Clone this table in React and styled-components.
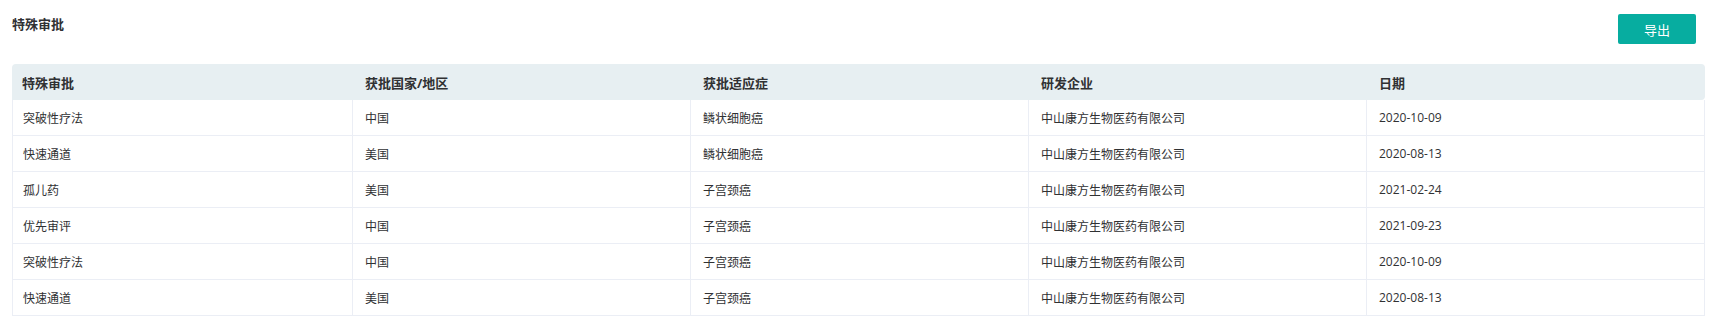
import React from "react";
import styled, { createGlobalStyle } from "styled-components";

const GlobalStyle = createGlobalStyle`
  html, body { margin: 0; padding: 0; background: #ffffff; }
  body {
    font-family: "Open Sans", "Noto Sans CJK SC", "Noto Sans", sans-serif;
    color: #303133;
  }
`;

const Page = styled.div`
  width: 1714px;
  box-sizing: border-box;
  padding: 14px 9px 0 12px;
`;

const TopBar = styled.div`
  display: flex;
  justify-content: space-between;
  align-items: flex-start;
  margin-bottom: 20px;
`;

const Title = styled.h2`
  margin: 1px 0 0;
  font-size: 13px;
  line-height: 18px;
  font-weight: 700;
  color: #303133;
`;

const ExportButton = styled.button`
  width: 78px;
  height: 30px;
  margin-right: 9px;
  border: none;
  border-radius: 2px;
  background: #07ada0;
  color: #ffffff;
  font-family: inherit;
  font-size: 13px;
  cursor: pointer;
`;

const Table = styled.table`
  width: 100%;
  table-layout: fixed;
  border-collapse: separate;
  border-spacing: 0;
  font-size: 12px;
`;

const HeadCell = styled.th`
  height: 36px;
  padding: 0 12px;
  padding-left: ${(p) => (p.$first ? "10px" : "12px")};
  background: #e7eff2;
  text-align: left;
  font-size: 13px;
  font-weight: 700;
  color: #303133;
  box-sizing: border-box;
  &:first-child { border-top-left-radius: 4px; }
  &:last-child { border-top-right-radius: 4px; border-bottom-right-radius: 4px; }
`;

const Cell = styled.td`
  height: 36px;
  box-sizing: border-box;
  padding: 0 12px;
  padding-left: ${(p) => (p.$first ? "10px" : "12px")};
  border-bottom: 1px solid #ebeef5;
  border-right: 1px solid #ebeef5;
  border-left: ${(p) => (p.$first ? "1px solid #ebeef5" : "none")};
  color: #303133;
  font-size: 12px;
  white-space: nowrap;
`;

const columns = ["特殊审批", "获批国家/地区", "获批适应症", "研发企业", "日期"];

const rows = [
  ["突破性疗法", "中国", "鳞状细胞癌", "中山康方生物医药有限公司", "2020-10-09"],
  ["快速通道", "美国", "鳞状细胞癌", "中山康方生物医药有限公司", "2020-08-13"],
  ["孤儿药", "美国", "子宫颈癌", "中山康方生物医药有限公司", "2021-02-24"],
  ["优先审评", "中国", "子宫颈癌", "中山康方生物医药有限公司", "2021-09-23"],
  ["突破性疗法", "中国", "子宫颈癌", "中山康方生物医药有限公司", "2020-10-09"],
  ["快速通道", "美国", "子宫颈癌", "中山康方生物医药有限公司", "2020-08-13"],
];

export default function App() {
  return (
    <>
      <GlobalStyle />
      <Page>
        <TopBar>
          <Title>特殊审批</Title>
          <ExportButton>导出</ExportButton>
        </TopBar>
        <Table>
          <colgroup>
            <col style={{ width: "341px" }} />
            <col />
            <col />
            <col />
            <col />
          </colgroup>
          <thead>
            <tr>
              {columns.map((c, i) => (
                <HeadCell key={c} $first={i === 0}>{c}</HeadCell>
              ))}
            </tr>
          </thead>
          <tbody>
            {rows.map((r, ri) => (
              <tr key={ri}>
                {r.map((v, ci) => (
                  <Cell key={ci} $first={ci === 0}>{v}</Cell>
                ))}
              </tr>
            ))}
          </tbody>
        </Table>
      </Page>
    </>
  );
}
